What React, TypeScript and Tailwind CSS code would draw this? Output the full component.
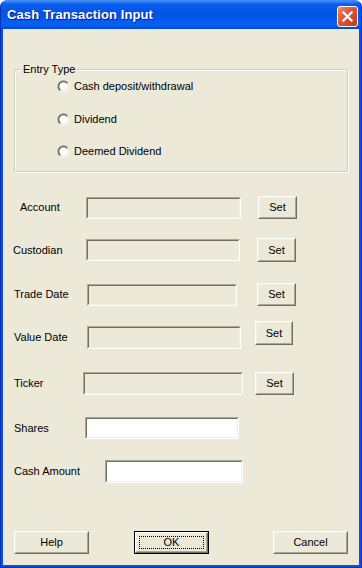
import React from 'react'

const font = { fontFamily: '"Liberation Sans", Arial, sans-serif' }

// classic raised 3D button (XP dialog, classic controls)
function RaisedButton({ label, className, focused }: { label: string; className: string; focused?: boolean }) {
  const face = (
    <div className="flex-1 flex border border-t-white border-l-white border-b-[#716F64] border-r-[#716F64]">
      <div className="relative flex-1 flex items-center justify-center border border-t-[#F1EFE2] border-l-[#F1EFE2] border-b-[#ACA899] border-r-[#ACA899] bg-[#ECE9D8] text-[11px] text-black">
        {label}
        {focused && <span className="absolute inset-[2px] border border-dotted border-black" />}
      </div>
    </div>
  )
  if (focused) {
    return <div className={`flex border border-black ${className}`}>{face}</div>
  }
  return <div className={`flex ${className}`}>{face}</div>
}

function TextBox({ className, white }: { className: string; white?: boolean }) {
  return (
    <div className={`flex border border-t-[#ACA899] border-l-[#ACA899] border-b-white border-r-white ${className}`}>
      <div
        className={`flex-1 border border-t-[#716F64] border-l-[#716F64] border-b-[#F1EFE2] border-r-[#F1EFE2] ${
          white ? 'bg-white' : 'bg-[#ECE9D8]'
        }`}
      />
    </div>
  )
}

function Radio({ label, className }: { label: string; className: string }) {
  return (
    <div className={`flex items-center h-[13px] ${className}`}>
      <svg width="13" height="13" viewBox="0 0 13 13" className="ml-[42px]">
        <defs>
          <linearGradient id="ro" x1="0" y1="0" x2="1" y2="1">
            <stop offset="0.45" stopColor="#9A978A" />
            <stop offset="0.6" stopColor="#FFFFFF" />
          </linearGradient>
          <linearGradient id="ri" x1="0" y1="0" x2="1" y2="1">
            <stop offset="0.45" stopColor="#5A5850" />
            <stop offset="0.6" stopColor="#E4E1D2" />
          </linearGradient>
        </defs>
        <circle cx="6.5" cy="6.5" r="6.2" fill="url(#ro)" />
        <circle cx="6.5" cy="6.5" r="5.2" fill="url(#ri)" />
        <circle cx="6.5" cy="6.5" r="4.2" fill="#FFFFFF" />
      </svg>
      <span className="ml-[4px] text-[11px] text-black leading-none">{label}</span>
    </div>
  )
}

export default function App() {
  return (
    <div className="w-[362px] h-[568px] bg-white" style={font}>
      <div className="w-full h-full flex flex-col rounded-t-[7px] bg-[#0A4EE4] border border-[#0A2FB8] border-t-[#3F8CF3] overflow-hidden">
        {/* title bar */}
        <div className="h-[28px] flex items-center justify-between pl-[6px] pr-[3px] bg-[linear-gradient(to_bottom,#3F8CF3_0%,#0A5CEE_12%,#0054E3_45%,#0760F6_85%,#0049D0_100%)]">
          <span className="text-white font-bold text-[13px] tracking-[0.1px] [text-shadow:1px_1px_#0A1A80]">
            Cash Transaction Input
          </span>
          <div className="w-[21px] h-[21px] mt-[3px] rounded-[3px] border border-white bg-[linear-gradient(135deg,#F08A6C_0%,#E2573A_40%,#C6391B_100%)] flex items-center justify-center">
            <svg width="13" height="13" viewBox="0 0 13 13">
              <path d="M2.5 2.5 L10.5 10.5 M10.5 2.5 L2.5 10.5" stroke="#FFFFFF" strokeWidth="2.2" strokeLinecap="square" />
            </svg>
          </div>
        </div>

        {/* client area */}
        <div className="flex-1 flex flex-col mx-[2px] mb-[2px] bg-[#ECE9D8] text-[11px] text-black">
          {/* Entry Type group */}
          <div className="relative mt-[40px] ml-[11px] w-[334px] h-[103px] border border-[#D0D0BF] shadow-[inset_1px_1px_0_#FFFFFF,1px_1px_0_#FFFFFF]">
            <span className="absolute -top-[8px] left-[6px] px-[2px] bg-[#ECE9D8] leading-[14px]">Entry Type</span>
            <Radio label="Cash deposit/withdrawal" className="mt-[10px]" />
            <Radio label="Dividend" className="mt-[20px]" />
            <Radio label="Deemed Dividend" className="mt-[19px]" />
          </div>

          {/* Account */}
          <div className="flex items-center mt-[24px] h-[23px]">
            <span className="ml-[17px] w-[66px]">Account</span>
            <TextBox className="w-[155px] h-[22px]" />
            <RaisedButton label="Set" className="ml-[17px] w-[39px] h-[23px]" />
          </div>

          {/* Custodian */}
          <div className="flex items-center mt-[19px] h-[24px]">
            <span className="ml-[10px] w-[73px]">Custodian</span>
            <TextBox className="w-[154px] h-[22px]" />
            <RaisedButton label="Set" className="ml-[17px] w-[39px] h-[24px]" />
          </div>

          {/* Trade Date */}
          <div className="flex items-center mt-[21px] h-[23px]">
            <span className="ml-[11px] w-[73px]">Trade Date</span>
            <TextBox className="w-[150px] h-[22px]" />
            <RaisedButton label="Set" className="ml-[20px] w-[39px] h-[23px]" />
          </div>

          {/* Value Date */}
          <div className="flex items-start mt-[15px]">
            <div className="flex items-center mt-[5px] h-[23px]">
              <span className="ml-[11px] w-[73px]">Value Date</span>
              <TextBox className="w-[154px] h-[23px]" />
            </div>
            <RaisedButton label="Set" className="ml-[14px] w-[38px] h-[24px]" />
          </div>

          {/* Ticker */}
          <div className="flex items-center mt-[23px] h-[23px]">
            <span className="ml-[11px] w-[69px]">Ticker</span>
            <TextBox className="w-[160px] h-[23px]" />
            <RaisedButton label="Set" className="ml-[12px] w-[39px] h-[23px]" />
          </div>

          {/* Shares */}
          <div className="flex items-center mt-[22px] h-[22px]">
            <span className="ml-[11px] w-[71px]">Shares</span>
            <TextBox white className="w-[154px] h-[22px]" />
          </div>

          {/* Cash Amount */}
          <div className="flex items-center mt-[21px] h-[23px]">
            <span className="ml-[11px] w-[91px]">Cash Amount</span>
            <TextBox white className="w-[138px] h-[23px]" />
          </div>

          {/* bottom buttons */}
          <div className="flex items-center mt-[48px]">
            <RaisedButton label="Help" className="ml-[11px] w-[75px] h-[23px]" />
            <RaisedButton label="OK" focused className="ml-[45px] w-[75px] h-[23px]" />
            <RaisedButton label="Cancel" className="ml-[64px] w-[75px] h-[23px]" />
          </div>
        </div>
      </div>
    </div>
  )
}
